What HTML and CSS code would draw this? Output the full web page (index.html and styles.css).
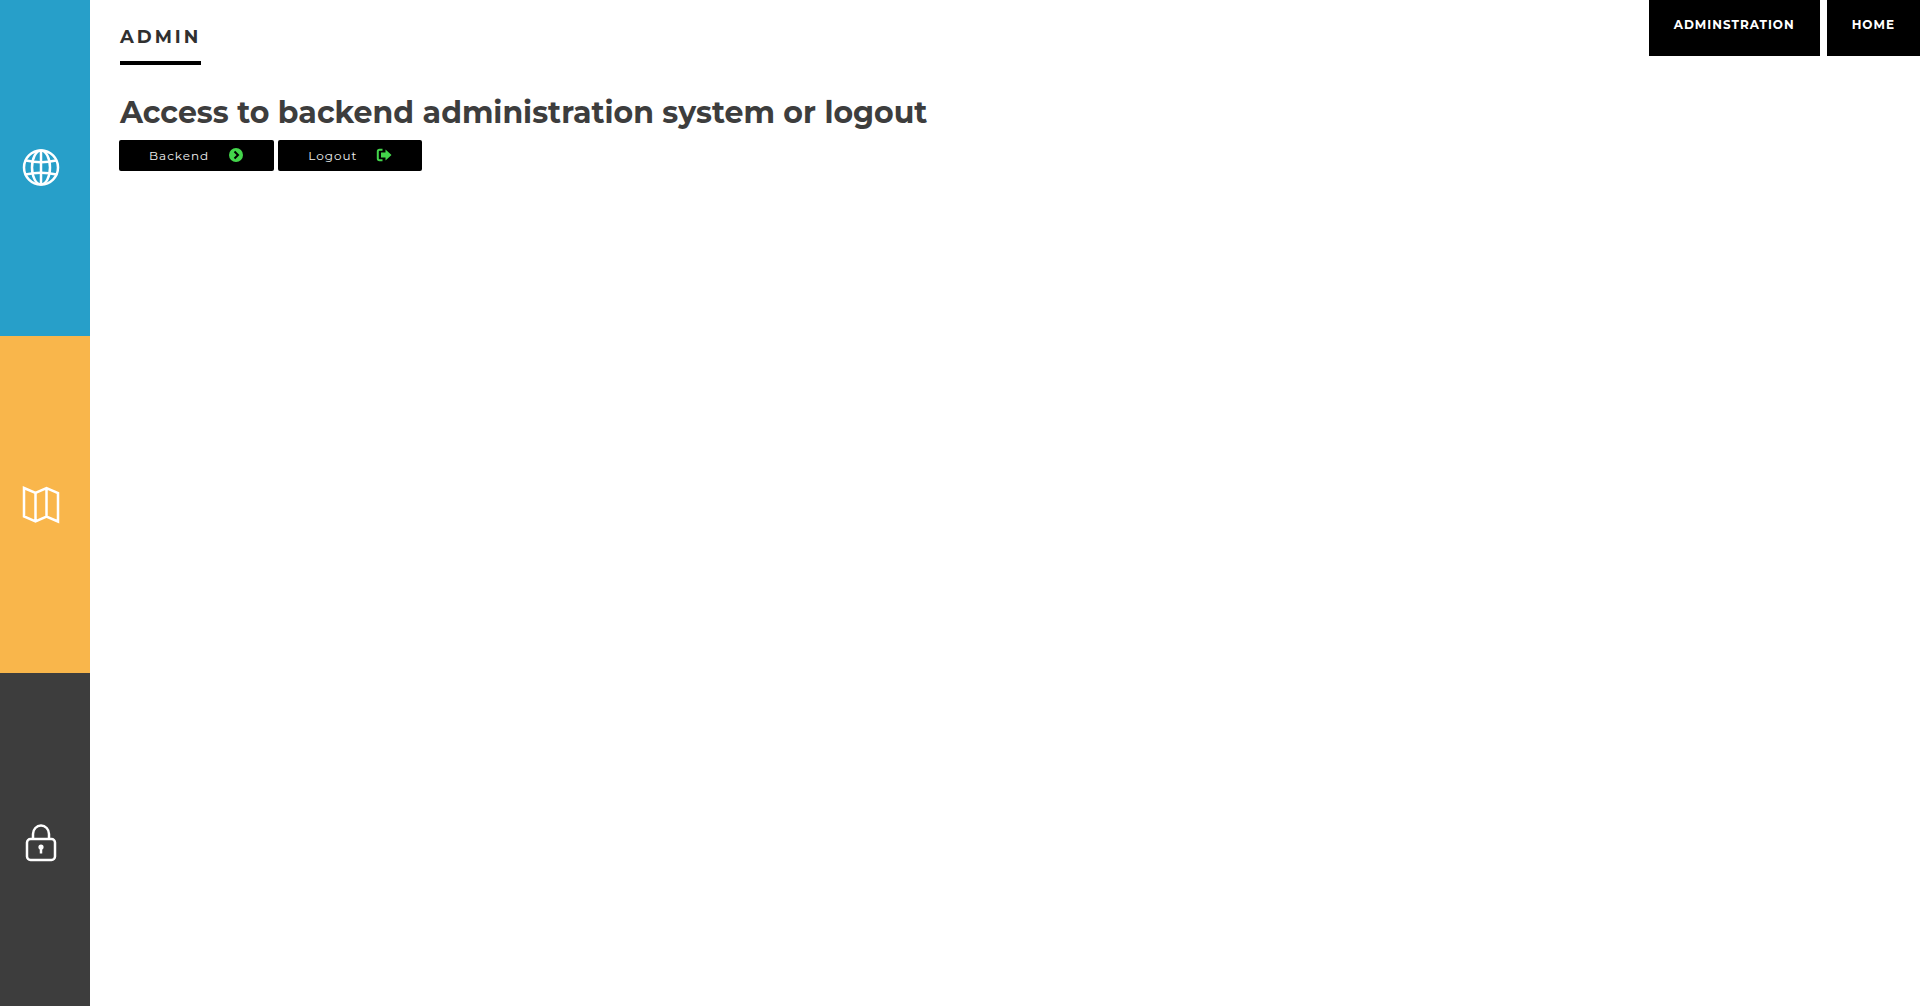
FILE: index.html
```html
<!DOCTYPE html>
<html lang="en">
<head>
<meta charset="utf-8">
<meta name="viewport" content="width=device-width, initial-scale=1">
<title>Admin</title>
<link rel="stylesheet" href="styles.css">
</head>
<body>
<div class="page">
  <nav class="sidebar" aria-label="Sections">
    <a class="tile tile-globe" href="#globe" aria-label="Website">
      <svg class="tile-icon" viewBox="0 0 38 38" aria-hidden="true">
        <circle cx="19" cy="18.500" r="17"/>
        <ellipse cx="19" cy="18.500" rx="9" ry="17"/>
        <path d="M19 2v33"/>
        <path d="M4 11.500Q19 15 34 11.500M3.500 25.500Q19 22 34.500 25.500"/>
      </svg>
    </a>
    <a class="tile tile-map" href="#map" aria-label="Map">
      <svg class="tile-icon" viewBox="0 0 38 38" aria-hidden="true">
        <path d="M2 3L13.500 8L24.500 3L36 8V36.500L24.500 31.500L13.500 36.500L2 31.500ZM13.500 8V36.500M24.500 3V31.500"/>
      </svg>
    </a>
    <a class="tile tile-lock" href="#lock" aria-label="Security">
      <svg class="tile-icon" viewBox="0 0 38 38" aria-hidden="true">
        <rect x="5" y="17" width="28" height="21" rx="3.500"/>
        <path d="M11 17V12a8 8.500 0 0 1 16 0V17"/>
        <circle class="keyhole" cx="19" cy="25" r="2.600"/>
        <path d="M19 25.500v6"/>
      </svg>
    </a>
  </nav>
  <main class="content">
    <header class="topbar">
      <h1 class="title">ADMIN</h1>
      <nav class="menu" aria-label="Main">
        <a class="menu-link" href="#administration">ADMINSTRATION</a>
        <a class="menu-link" href="#home">HOME</a>
      </nav>
    </header>
    <h2 class="heading">Access to backend administration system or logout</h2>
    <div class="actions">
      <button class="action" type="button">Backend
        <svg class="action-icon" viewBox="0 0 14 14" aria-hidden="true">
          <circle cx="7" cy="7" r="7"/>
          <path class="chevron" d="M5.500 3.500L9 7L5.500 10.500"/>
        </svg>
      </button>
      <button class="action" type="button">Logout
        <svg class="action-icon" viewBox="0 0 14 14" aria-hidden="true">
          <path class="door" d="M5.500 1.800H2.500Q.8 1.800 .8 3.500V10.500Q.8 12.200 2.500 12.200H5.500"/>
          <path d="M4 4.500H8.500V1.500L14.500 7L8.500 12.500V9.500H4Z"/>
        </svg>
      </button>
    </div>
  </main>
</div>
</body>
</html>
```
FILE: styles.css
```css
* {
  box-sizing: border-box;
}

body {
  margin: 0;
  background: #fff;
  color: #3d3d3d;
  font-family: Montserrat, Inter, "Open Sans", sans-serif;
}

.page {
  display: flex;
  height: 100vh;
  overflow: hidden;
}

.sidebar {
  display: flex;
  flex: none;
  flex-direction: column;
  width: 90px;
  height: calc(100vh + 3px);
}

.tile {
  display: flex;
  flex: 1;
  align-items: center;
  justify-content: center;
  padding-right: 8px;
}

.tile-globe { background: #279fc9; }
.tile-map { background: #f9b64b; }
.tile-lock { background: #3d3d3d; }

.tile-icon {
  width: 38px;
  height: 38px;
  overflow: visible;
  fill: none;
  stroke: #fff;
  stroke-width: 2.5;
}

.tile-icon .keyhole {
  fill: #fff;
  stroke: none;
}

.content {
  flex: 1;
  padding-left: 30px;
}

.topbar {
  display: flex;
  align-items: flex-start;
  justify-content: space-between;
}

.title {
  margin: 0;
  padding: 25px 0 12px;
  border-bottom: 4px solid #000;
  color: #303030;
  font-size: 18px;
  font-weight: 700;
  line-height: 24px;
  letter-spacing: 3px;
}

.menu {
  display: flex;
  gap: 7px;
}

.menu-link {
  height: 56px;
  padding: 15px 25px;
  background: #000;
  color: #fff;
  font-size: 12px;
  font-weight: 700;
  line-height: 19px;
  letter-spacing: 1px;
  text-decoration: none;
}

.heading {
  margin: 28px 0 7px;
  font-size: 30px;
  font-weight: 700;
  line-height: 40px;
}

.actions {
  display: flex;
  gap: 4px;
  margin-left: -1px;
}

.action {
  display: flex;
  align-items: center;
  gap: 20px;
  height: 31px;
  padding: 0 31px 0 30px;
  border: 0;
  border-radius: 2px;
  background: #000;
  color: #f0f0f0;
  font-family: inherit;
  font-size: 12px;
  letter-spacing: 1px;
}

.action-icon {
  width: 14px;
  height: 14px;
  margin-bottom: 2px;
  overflow: visible;
  fill: #43d54b;
}

.chevron {
  fill: none;
  stroke: #000;
  stroke-width: 2;
}

.door {
  fill: none;
  stroke: #43d54b;
  stroke-width: 2;
}
```
